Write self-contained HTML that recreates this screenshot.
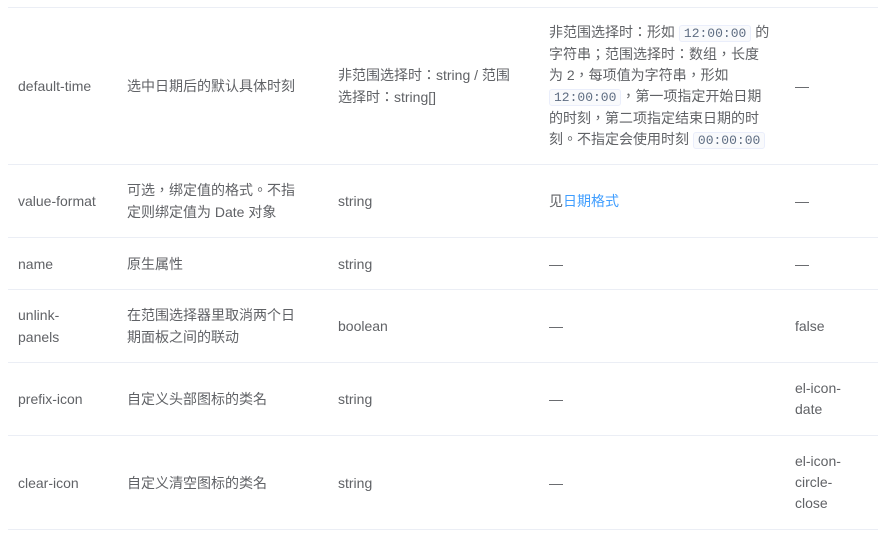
<!DOCTYPE html>
<html><head><meta charset="utf-8"><style>
body{margin:0;background:#fff;font-family:"Liberation Sans","Noto Sans CJK TC",sans-serif;font-size:14px;color:#606266;}
table{position:absolute;left:8px;top:7px;width:870px;border-collapse:collapse;table-layout:fixed;}
td{border-top:1px solid #ebeef5;border-bottom:1px solid #ebeef5;padding:0 10px;vertical-align:middle;line-height:22px;}
td div{word-break:break-word;}
code{font-family:"Liberation Mono",monospace;font-size:13px;background:#f9fafc;border:1px solid #eaeefb;border-radius:3px;padding:0 4px;color:#5e6d82;}
a{color:#409eff;text-decoration:none;}
</style></head><body>
<table>
<colgroup><col style="width:109px"><col style="width:211px"><col style="width:211px"><col style="width:246px"><col style="width:93px"></colgroup>
<tr style="height:157px"><td><div style="width:84px">default-time</div></td><td><div style="width:175px">选中日期后的默认具体时刻</div></td><td><div style="width:185px">非范围选择时：string / 范围选择时：string[]</div></td><td style="line-height:21px"><div style="width:222px">非范围选择时：形如 <code>12:00:00</code> 的字符串；范围选择时：数组，长度为 2，每项值为字符串，形如 <code>12:00:00</code>，第一项指定开始日期的时刻，第二项指定结束日期的时刻。不指定会使用时刻 <code>00:00:00</code></div></td><td><div style="width:55px">—</div></td></tr>
<tr style="height:73px"><td><div style="width:84px">value-format</div></td><td><div style="width:175px">可选，绑定值的格式。不指定则绑定值为 Date 对象</div></td><td>string</td><td>见<a>日期格式</a></td><td>—</td></tr>
<tr style="height:52px"><td>name</td><td>原生属性</td><td>string</td><td>—</td><td>—</td></tr>
<tr style="height:73px"><td><div style="width:60px">unlink-panels</div></td><td><div style="width:175px">在范围选择器里取消两个日期面板之间的联动</div></td><td>boolean</td><td>—</td><td>false</td></tr>
<tr style="height:73px"><td>prefix-icon</td><td>自定义头部图标的类名</td><td>string</td><td>—</td><td style="line-height:21px"><div style="width:55px">el-icon-date</div></td></tr>
<tr style="height:94px"><td>clear-icon</td><td>自定义清空图标的类名</td><td>string</td><td>—</td><td style="line-height:21px"><div style="width:55px">el-icon-circle-close</div></td></tr>
</table>
</body></html>
